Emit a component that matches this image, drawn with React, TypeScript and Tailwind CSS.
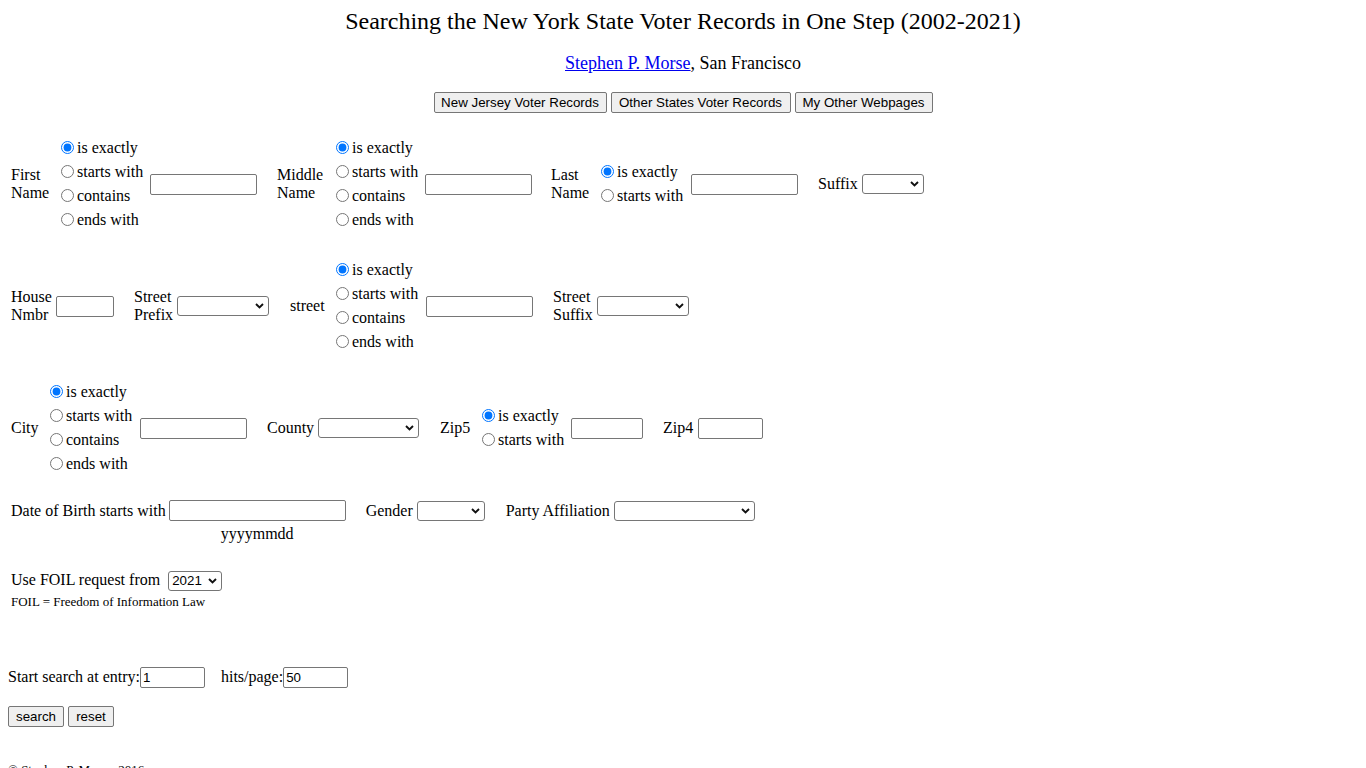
import React from "react";

const serif = { fontFamily: '"Liberation Serif", "Times New Roman", serif' };

function Chevron() {
  return (
    <svg width="9" height="6" viewBox="0 0 9 6" className="pointer-events-none absolute right-[5px] top-1/2 -translate-y-1/2">
      <path d="M1 1 L4.5 4.5 L8 1" fill="none" stroke="#111" strokeWidth="1.9" />
    </svg>
  );
}

function Select({ w, value = "" }: { w: number; value?: string }) {
  return (
    <span className="relative inline-block" style={{ width: w }}>
      <select
        className="block h-[20px] w-full appearance-none rounded-[3px] border border-[#767676] bg-white pl-[3px] text-[13.33px] leading-[18px] text-black"
        style={{ fontFamily: '"Liberation Sans", Arial, sans-serif' }}
        defaultValue={value}
      >
        <option value={value}>{value}</option>
      </select>
      <Chevron />
    </span>
  );
}

function TextInput({ w, value = "" }: { w: number; value?: string }) {
  return (
    <input
      type="text"
      defaultValue={value}
      className="block h-[21px] rounded-[2px] border border-[#767676] bg-white px-[2px] text-[13.33px] text-black outline-none"
      style={{ width: w, fontFamily: '"Liberation Sans", Arial, sans-serif' }}
    />
  );
}

function Radios({ name, items, w }: { name: string; items: string[]; w: number }) {
  return (
    <div className="flex flex-col" style={{ width: w }}>
      {items.map((t, i) => (
        <label key={t} className="flex h-[24px] items-center whitespace-nowrap">
          <input
            type="radio"
            name={name}
            defaultChecked={i === 0}
            className="m-0 ml-[5px] mr-[3px] h-[13px] w-[13px] -translate-y-[1px]"
          />
          <span>{t}</span>
        </label>
      ))}
    </div>
  );
}

function Lbl({ lines, w }: { lines: string[]; w: number }) {
  return (
    <div className="shrink-0 whitespace-nowrap leading-[18px]" style={{ width: w }}>
      {lines.map((l) => (
        <div key={l}>{l}</div>
      ))}
    </div>
  );
}

function Btn({ children, w }: { children: React.ReactNode; w?: number }) {
  return (
    <button
      type="button"
      className="h-[21px] rounded-[2px] border border-[#767676] bg-[#efefef] px-[6px] text-[13.33px] leading-[17px] text-black"
      style={{ width: w, fontFamily: '"Liberation Sans", Arial, sans-serif' }}
    >
      {children}
    </button>
  );
}

const four = ["is exactly", "starts with", "contains", "ends with"];
const two = ["is exactly", "starts with"];

export default function App() {
  return (
    <div className="h-[768px] overflow-hidden bg-white text-[16px] text-black" style={serif}>
      <h1 className="pt-[7px] text-center text-[24px] leading-[28px] font-normal">
        Searching the New York State Voter Records in One Step (2002-2021)
      </h1>
      <p className="mt-[18px] text-center text-[18px] leading-[20px]">
        <a href="#" className="text-[#0000ee] underline">Stephen P. Morse</a>, San Francisco
      </p>
      <div className="mt-[19px] flex justify-center gap-[4px]">
        <Btn w={173}>New Jersey Voter Records</Btn>
        <Btn w={180}>Other States Voter Records</Btn>
        <Btn w={138}>My Other Webpages</Btn>
      </div>

      {/* name row */}
      <div className="mt-[23px] flex items-center pl-[11px]">
        <Lbl lines={["First", "Name"]} w={45} />
        <Radios name="fn" items={four} w={94} />
        <TextInput w={107} />
        <div className="w-[20px]" />
        <Lbl lines={["Middle", "Name"]} w={54} />
        <Radios name="mn" items={four} w={94} />
        <TextInput w={107} />
        <div className="w-[19px]" />
        <Lbl lines={["Last", "Name"]} w={45} />
        <Radios name="ln" items={two} w={95} />
        <TextInput w={107} />
        <div className="w-[20px]" />
        <Lbl lines={["Suffix"]} w={44} />
        <Select w={62} />
      </div>

      {/* street row */}
      <div className="mt-[26px] flex items-center pl-[11px]">
        <Lbl lines={["House", "Nmbr"]} w={45} />
        <TextInput w={58} />
        <div className="w-[20px]" />
        <Lbl lines={["Street", "Prefix"]} w={43} />
        <Select w={92} />
        <div className="w-[21px]" />
        <Lbl lines={["street"]} w={41} />
        <Radios name="st" items={four} w={95} />
        <TextInput w={107} />
        <div className="w-[20px]" />
        <Lbl lines={["Street", "Suffix"]} w={44} />
        <Select w={92} />
      </div>

      {/* place row */}
      <div className="mt-[26px] flex items-center pl-[11px]">
        <Lbl lines={["City"]} w={34} />
        <Radios name="ct" items={four} w={95} />
        <TextInput w={107} />
        <div className="w-[20px]" />
        <Lbl lines={["County"]} w={51} />
        <Select w={101} />
        <div className="w-[21px]" />
        <Lbl lines={["Zip5"]} w={37} />
        <Radios name="zp" items={two} w={94} />
        <TextInput w={72} />
        <div className="w-[20px]" />
        <Lbl lines={["Zip4"]} w={35} />
        <TextInput w={65} />
      </div>

      {/* birth row */}
      <div className="mt-[24px] flex items-start pl-[11px]">
        <div className="flex h-[21px] items-center whitespace-nowrap">Date of Birth starts with</div>
        <div className="ml-[3px] flex flex-col items-center">
          <TextInput w={177} />
          <div className="mt-[4px] leading-[18px]">yyyymmdd</div>
        </div>
        <div className="flex h-[21px] items-center">
          <div className="w-[20px]" />
          <Lbl lines={["Gender"]} w={51} />
          <Select w={68} />
          <div className="w-[21px]" />
          <Lbl lines={["Party Affiliation"]} w={108} />
          <Select w={141} />
        </div>
      </div>

      {/* foil row */}
      <div className="mt-[25px] flex items-center pl-[11px]">
        <span className="whitespace-nowrap">Use FOIL request from</span>
        <span className="ml-[8px]">
          <Select w={54} value="2021" />
        </span>
      </div>
      <div className="mt-[2px] pl-[11px] text-[13px] leading-[15px]">FOIL = Freedom of Information Law</div>

      {/* paging row */}
      <div className="mt-[56px] flex items-center pl-[8px]">
        <span className="whitespace-nowrap">Start search at entry:</span>
        <TextInput w={65} value="1" />
        <span className="ml-[16px] whitespace-nowrap">hits/page:</span>
        <TextInput w={65} value="50" />
      </div>

      <div className="mt-[17px] flex gap-[4px] pl-[8px]">
        <Btn w={56}>search</Btn>
        <Btn w={46}>reset</Btn>
      </div>

      <div className="mt-[35px] pl-[8px] text-[13px] leading-[15px] text-black">© Stephen P. Morse, 2016</div>
    </div>
  );
}
